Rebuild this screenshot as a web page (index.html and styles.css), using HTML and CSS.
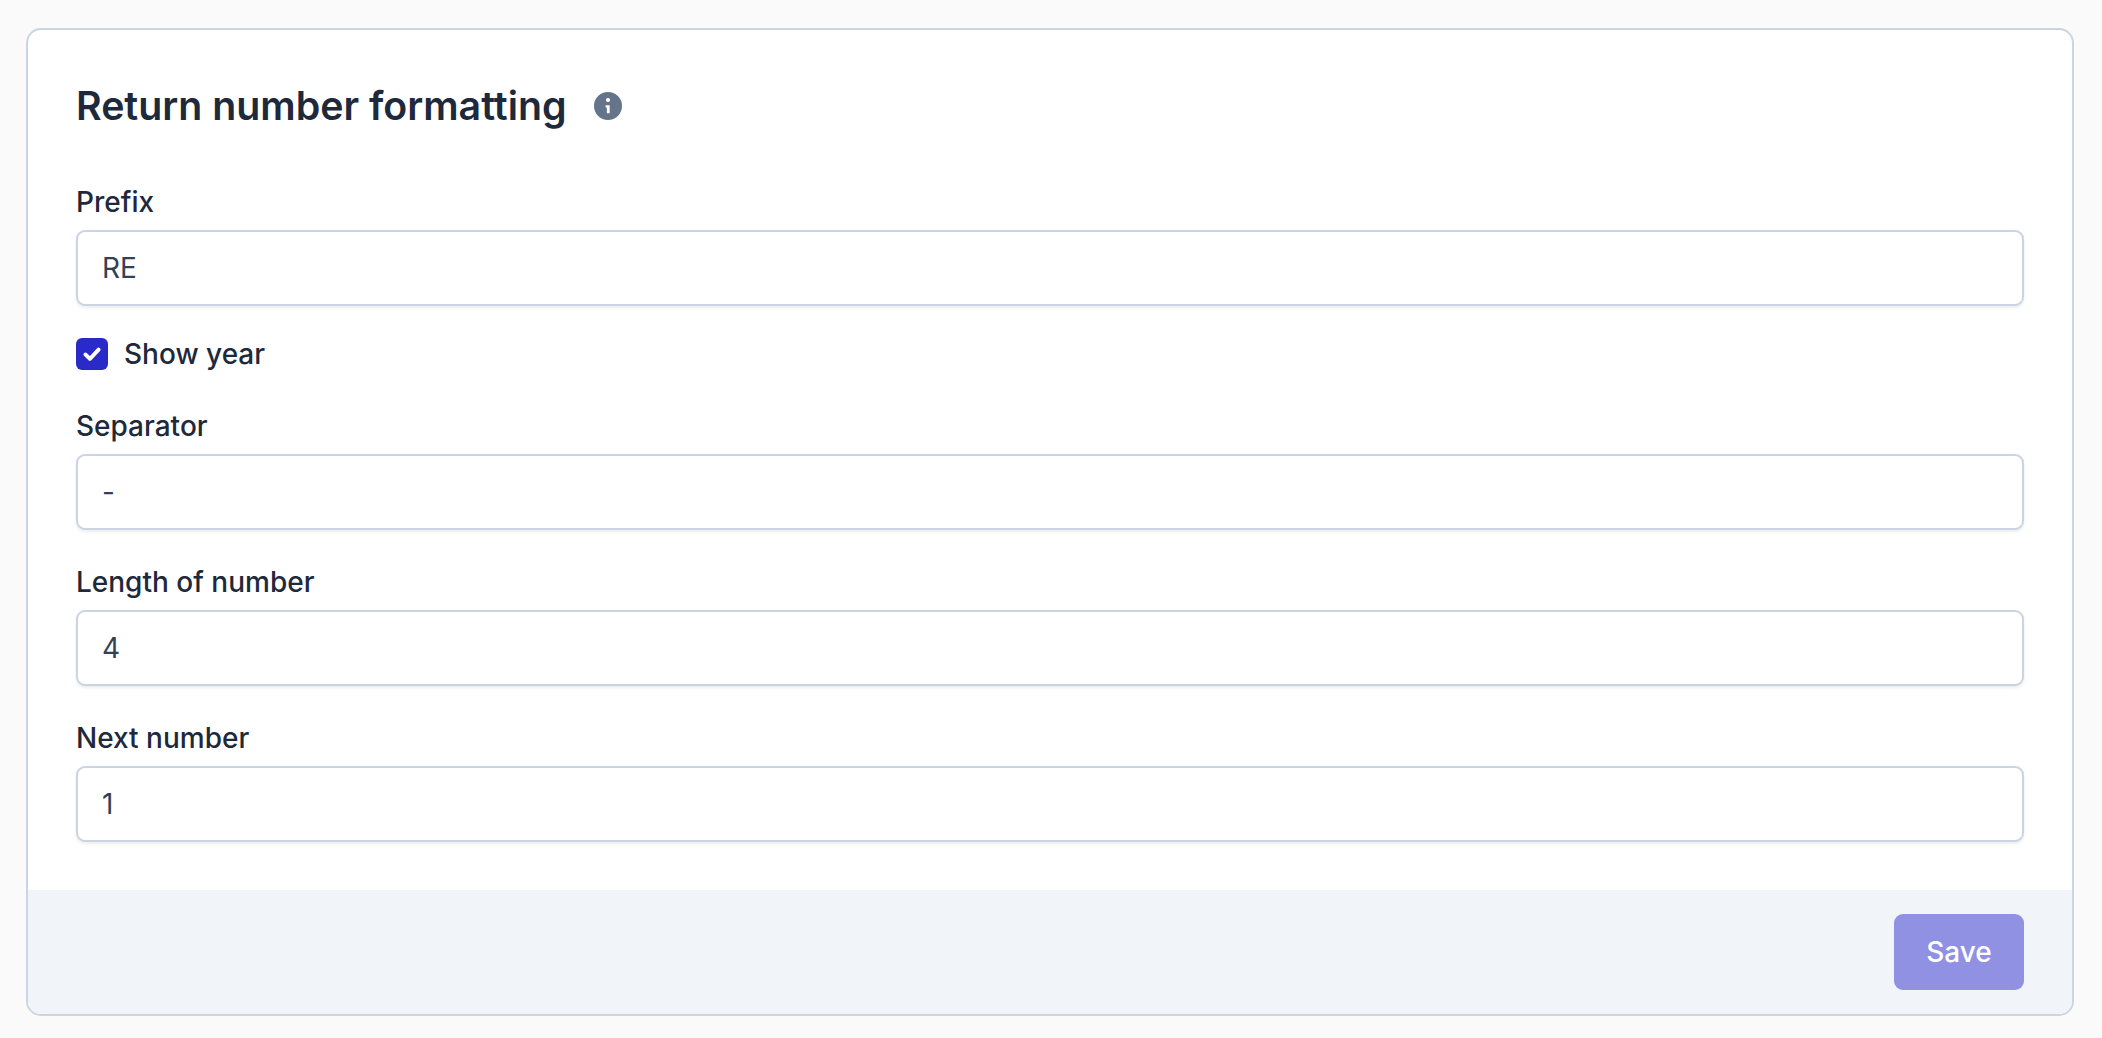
FILE: index.html
```html
<!DOCTYPE html>
<html lang="en">
<head>
<meta charset="utf-8">
<title>Return number formatting</title>
<link rel="stylesheet" href="styles.css">
</head>
<body>
<form class="card">
  <div class="card-body">
    <div class="heading">
      <h2 class="title">Return number formatting</h2>
      <svg class="info" viewBox="0 0 20 20" aria-hidden="true"><path fill-rule="evenodd" clip-rule="evenodd" d="M10 0a10 10 0 1 1 0 20a10 10 0 0 1 0-20ZM10 4.2a1.5 1.5 0 1 0 0 3a1.5 1.5 0 0 0 0-3ZM8.3 9.4v1.6h.9v4.1h2V9.4Z"/></svg>
    </div>
    <div class="field">
      <label class="label">Prefix</label>
      <div class="input">RE</div>
    </div>
    <div class="check-row">
      <span class="check"><svg viewBox="0 0 16 16" aria-hidden="true"><path d="M3.6 8.3l3 3l5.8-6.2" fill="none" stroke="#fff" stroke-width="2.6" stroke-linecap="round" stroke-linejoin="round"/></svg></span>
      <span class="check-label">Show year</span>
    </div>
    <div class="field field-gap">
      <label class="label">Separator</label>
      <div class="input">-</div>
    </div>
    <div class="field field-gap">
      <label class="label">Length of number</label>
      <div class="input">4</div>
    </div>
    <div class="field">
      <label class="label">Next number</label>
      <div class="input">1</div>
    </div>
  </div>
  <div class="card-footer">
    <button type="button" class="save">Save</button>
  </div>
</form>
</body>
</html>
```
FILE: styles.css
```css
* { box-sizing: border-box; }
html, body { height: 100%; }
body {
  margin: 0;
  padding: 28px 28px 22px 26px;
  background: #fafafa;
  font-family: Inter, "Liberation Sans", sans-serif;
  color: #1e293b;
  overflow: hidden;
}
.card {
  background: #fff;
  border: 2px solid #cbd5e1;
  border-radius: 15px;
  overflow: hidden;
  display: flex;
  flex-direction: column;
  height: 988px;
}
.card-body { padding: 48px 48px 0; flex: 1; }
.heading { display: flex; align-items: center; gap: 27px; height: 56px; margin-bottom: 48px; }
.title { margin: 0; font-size: 39.3px; line-height: 56px; font-weight: 600; }
.info { width: 28px; height: 28px; fill: #64748b; }
.field-gap { margin-bottom: 32px; }
.label { display: block; font-size: 28px; line-height: 40px; font-weight: 450; margin-bottom: 8px; }
.input {
  height: 76px;
  border: 2px solid #cbd5e1;
  border-radius: 9px;
  background: #fff;
  box-shadow: 0 1.5px 3px rgba(15, 23, 42, .08);
  padding: 0 24px;
  display: flex;
  align-items: center;
  font-size: 28px;
  color: #334155;
}
.check-row { display: flex; align-items: center; gap: 16px; height: 36px; margin: 30px 0 34px; }
.check { width: 32px; height: 32px; border-radius: 6px; background: #2a2ac9; display: flex; align-items: center; justify-content: center; }
.check svg { width: 24px; height: 24px; }
.check-label { font-size: 28px; font-weight: 450; }
.card-footer { background: #f1f5f9; height: 124px; padding: 24px 48px; display: flex; justify-content: flex-end; }
.save {
  width: 130px; height: 76px; border: 0; border-radius: 9px;
  background: #9091e2; color: #fff;
  font: 450 28px Inter, "Liberation Sans", sans-serif;
}
```
